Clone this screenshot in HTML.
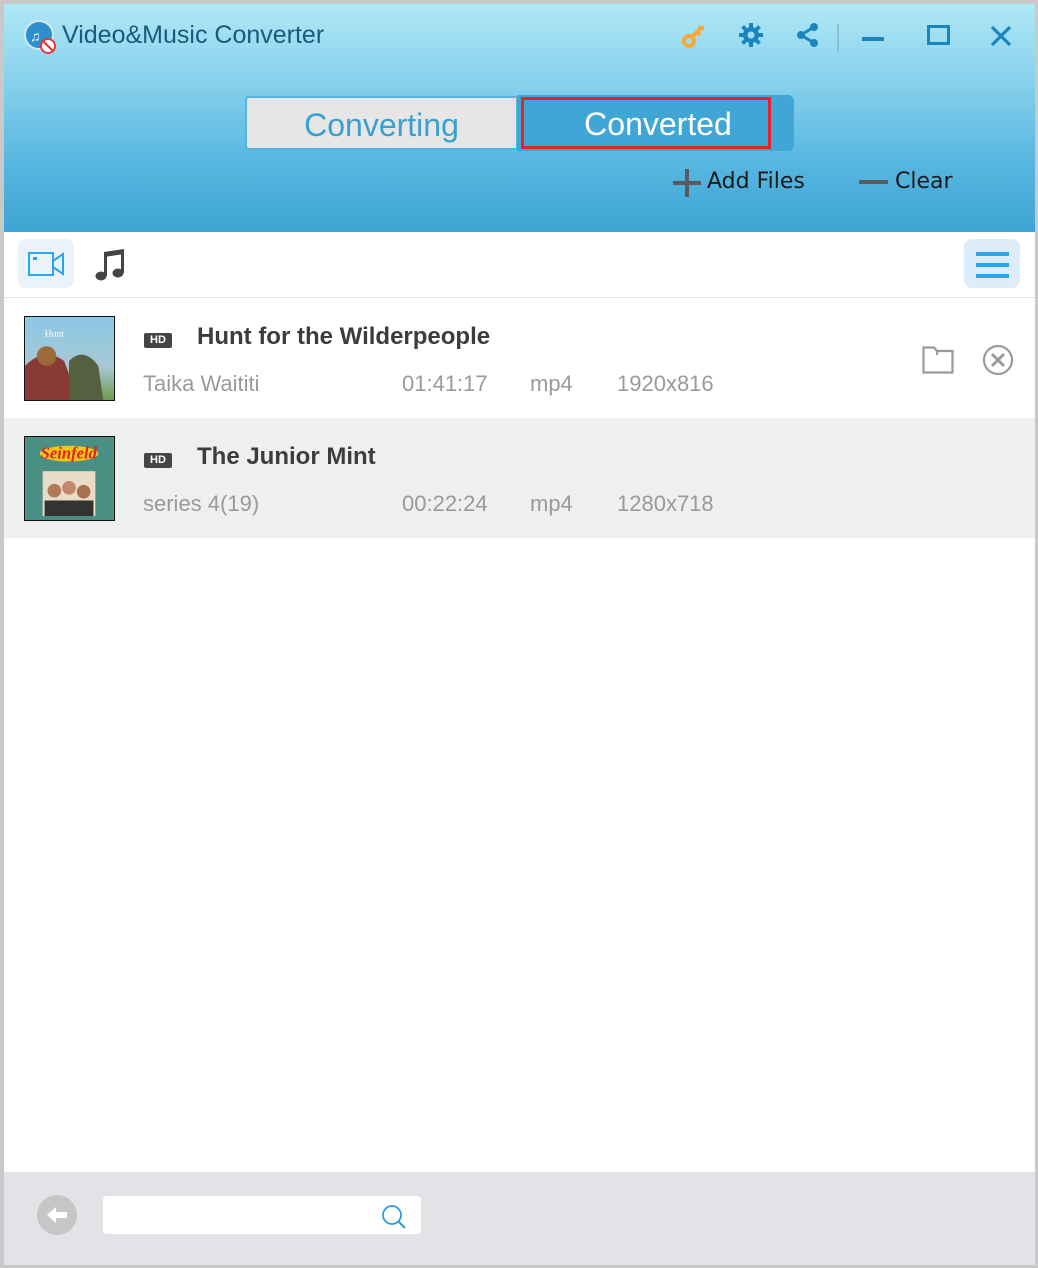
<!DOCTYPE html>
<html><head><meta charset="utf-8"><style>
*{margin:0;padding:0;box-sizing:border-box}
body{width:1038px;height:1268px;background:#c9c9c9;font-family:"Liberation Sans",sans-serif;position:relative;overflow:hidden}
.win{position:absolute;left:4px;top:4px;width:1031px;height:1261px;background:#fff;overflow:hidden}
.hdr{position:absolute;left:0;top:0;width:1031px;height:228px;background:linear-gradient(180deg,#b0e8f6 0%,#86d0ec 35%,#56b6e0 70%,#3ea5d4 100%)}
.abs{position:absolute}
.title{left:58px;top:17px;font-size:25px;color:#1b5a7a;font-family:"Liberation Sans",sans-serif}
.tab1{left:241px;top:92px;width:273px;height:54px;background:#e6e6e6;border:2px solid #55b5de;border-radius:4px 0 0 4px;color:#3aa0d2;font-size:32px;text-align:center;line-height:54px}
.tab2{left:513px;top:91px;width:277px;height:56px;background:#3fa6d5;border-radius:0 6px 6px 0}
.red{left:517px;top:93px;width:250px;height:52px;border:3px solid #e8212b;color:#fff;font-size:32px;text-align:center;line-height:48px;padding-left:24px}
.act{font-size:22px;color:#1a1a1a;font-family:"DejaVu Sans",sans-serif}
.row{position:absolute;left:0;width:1031px;height:120px}
.thumb{position:absolute;left:20px;top:18px;width:91px;height:85px;border:1px solid #111}
.hd{position:absolute;left:140px;width:28px;height:15px;background:#444;border-radius:2px;color:#fff;font-size:11px;font-weight:bold;text-align:center;line-height:15px}
.rt{position:absolute;left:193px;font-size:24px;font-weight:bold;color:#3c3c3c}
.sub{position:absolute;font-size:22px;color:#9a9a9a}
</style></head><body>
<div class="win">
<div class="hdr"></div>
<svg class="abs" style="left:20px;top:16px" width="36" height="36" viewBox="0 0 36 36"><circle cx="15" cy="15" r="14" fill="#2d8fce" stroke="#cfeaf7" stroke-width="2"/><text x="6" y="21" font-size="14" fill="#fff" font-family="Liberation Sans">♫</text><circle cx="24" cy="26" r="7" fill="#fff" stroke="#e33" stroke-width="2"/><line x1="19" y1="21" x2="29" y2="31" stroke="#e33" stroke-width="2"/></svg>
<div class="abs title">Video&amp;Music Converter</div>
<svg class="abs" style="left:676px;top:18px" width="28" height="28" viewBox="0 0 28 28"><circle cx="9" cy="19" r="5" fill="none" stroke="#f6a93b" stroke-width="4"/><path d="M12 15 L22 5 M18 6 L24 6 M17 10 L20 13" stroke="#f6a93b" stroke-width="4" fill="none"/></svg>
<svg class="abs" style="left:734px;top:18px" width="26" height="26" viewBox="0 0 26 26"><g fill="#1a86c0"><circle cx="13" cy="13" r="8"/><g id="t"><rect x="11" y="1" width="4" height="6"/></g><use href="#t" transform="rotate(45 13 13)"/><use href="#t" transform="rotate(90 13 13)"/><use href="#t" transform="rotate(135 13 13)"/><use href="#t" transform="rotate(180 13 13)"/><use href="#t" transform="rotate(225 13 13)"/><use href="#t" transform="rotate(270 13 13)"/><use href="#t" transform="rotate(315 13 13)"/></g><circle cx="13" cy="13" r="3.5" fill="#9fdcf2"/></svg>
<svg class="abs" style="left:792px;top:18px" width="24" height="26" viewBox="0 0 24 26"><g fill="#1a86c0"><circle cx="18" cy="5" r="4"/><circle cx="5" cy="13" r="4"/><circle cx="18" cy="21" r="4"/></g><path d="M18 5 L5 13 L18 21" stroke="#1a86c0" stroke-width="3" fill="none"/></svg>
<div class="abs" style="left:833px;top:20px;width:2px;height:28px;background:#8dbfd4"></div>
<div class="abs" style="left:858px;top:33px;width:22px;height:4px;background:#1a86c0"></div>
<div class="abs" style="left:923px;top:21px;width:23px;height:20px;border:3px solid #1a86c0"></div>
<svg class="abs" style="left:986px;top:21px" width="22" height="22" viewBox="0 0 22 22"><path d="M2 2 L20 20 M20 2 L2 20" stroke="#1a86c0" stroke-width="3.2"/></svg>
<div class="abs tab1">Converting</div>
<div class="abs tab2"></div>
<div class="abs red">Converted</div>
<svg class="abs" style="left:668px;top:164px" width="30" height="30" viewBox="0 0 30 30"><path d="M15 1 V29 M1 15 H29" stroke="#5a5a5a" stroke-width="4"/></svg>
<div class="abs act" style="left:703px;top:165px">Add Files</div>
<div class="abs" style="left:855px;top:176px;width:29px;height:4px;background:#5a5a5a"></div>
<div class="abs act" style="left:891px;top:165px">Clear</div>
<div class="abs" style="left:14px;top:235px;width:56px;height:49px;background:#ebf3fa;border-radius:8px"></div>
<svg class="abs" style="left:24px;top:247px" width="38" height="26" viewBox="0 0 38 26"><rect x="1" y="2" width="24" height="22" fill="none" stroke="#2aa6e8" stroke-width="2"/><path d="M25 10 L35 3 V23 L25 16" fill="none" stroke="#2aa6e8" stroke-width="2"/><rect x="5" y="6" width="4" height="3" fill="#2aa6e8"/></svg>
<svg class="abs" style="left:90px;top:244px" width="32" height="34" viewBox="0 0 32 34"><g fill="#444"><ellipse cx="7" cy="28" rx="5.5" ry="4.5"/><ellipse cx="24" cy="25" rx="5.5" ry="4.5"/><rect x="10" y="4" width="3" height="24"/><rect x="27" y="2" width="3" height="23"/><path d="M10 4 L30 1 V6 L10 9Z"/></g></svg>
<div class="abs" style="left:960px;top:235px;width:56px;height:49px;background:#dcedf9;border-radius:8px"></div>
<div class="abs" style="left:972px;top:248px;width:33px;height:4px;background:#2aa6e8;box-shadow:0 11px 0 #2aa6e8,0 22px 0 #2aa6e8"></div>
<div class="abs" style="left:0;top:293px;width:1031px;height:1px;background:#e0e0e0"></div>

<div class="row" style="top:294px;background:#fff">
<svg class="thumb" viewBox="0 0 91 85"><defs><linearGradient id="g1" x1="0" y1="0" x2="0" y2="1"><stop offset="0" stop-color="#8cc7e8"/><stop offset=".6" stop-color="#a7c8d4"/><stop offset="1" stop-color="#6d9a4c"/></linearGradient></defs><rect width="91" height="85" fill="url(#g1)"/><path d="M0 50 Q20 30 40 45 L55 85 H0Z" fill="#8a3a35"/><circle cx="22" cy="40" r="10" fill="#9a6a3a"/><path d="M45 45 Q60 30 75 50 L80 85 H45Z" fill="#556040"/><text x="20" y="20" font-size="10" fill="#fff" font-family="Liberation Serif">Hunt</text></svg>
<div class="hd" style="top:35px">HD</div>
<div class="rt" style="top:25px">Hunt for the Wilderpeople</div>
<div class="sub" style="left:139px;top:73px">Taika Waititi</div>
<div class="sub" style="left:398px;top:73px">01:41:17</div>
<div class="sub" style="left:526px;top:73px">mp4</div>
<div class="sub" style="left:613px;top:73px">1920x816</div>
<svg class="abs" style="left:918px;top:48px" width="32" height="28" viewBox="0 0 32 28"><path d="M1.5 1.5 H12 L15 5 H30.5 V26.5 H1.5Z M15 5 V9" fill="none" stroke="#9a9a9a" stroke-width="2.2"/></svg>
<svg class="abs" style="left:978px;top:46px" width="32" height="32" viewBox="0 0 32 32"><circle cx="16" cy="16" r="14" fill="none" stroke="#9a9a9a" stroke-width="2.2"/><path d="M10 10 L22 22 M22 10 L10 22" stroke="#9a9a9a" stroke-width="3"/></svg>
</div>
<div class="row" style="top:414px;background:#eeefef">
<svg class="thumb" viewBox="0 0 91 85"><rect width="91" height="85" fill="#4a8f84"/><ellipse cx="45" cy="17" rx="30" ry="8" fill="#f5c518"/><text x="16" y="22" font-size="17" font-style="italic" fill="#d22" font-family="Liberation Serif" font-weight="bold">Seinfeld</text><rect x="18" y="35" width="54" height="46" fill="#e8dcc8"/><circle cx="30" cy="55" r="7" fill="#b07a5a"/><circle cx="45" cy="52" r="7" fill="#c08a6a"/><circle cx="60" cy="56" r="7" fill="#a87050"/><rect x="20" y="65" width="50" height="16" fill="#333"/></svg>
<div class="hd" style="top:35px">HD</div>
<div class="rt" style="top:25px">The Junior Mint</div>
<div class="sub" style="left:139px;top:73px">series 4(19)</div>
<div class="sub" style="left:398px;top:73px">00:22:24</div>
<div class="sub" style="left:526px;top:73px">mp4</div>
<div class="sub" style="left:613px;top:73px">1280x718</div>
</div>

<div class="abs" style="left:0;top:1168px;width:1031px;height:93px;background:#e1e3e6"></div>
<svg class="abs" style="left:33px;top:1191px" width="40" height="40" viewBox="0 0 40 40"><circle cx="20" cy="20" r="20" fill="#c6c6c6"/><path d="M10 20 L19 12 V17 H30 V23 H19 V28Z" fill="#fff"/></svg>
<div class="abs" style="left:99px;top:1192px;width:318px;height:38px;background:#fff;border-radius:4px"></div>
<svg class="abs" style="left:376px;top:1199px" width="30" height="30" viewBox="0 0 30 30"><circle cx="12" cy="12" r="9" fill="none" stroke="#2a9fd6" stroke-width="1.8"/><path d="M18.5 18.5 L25 25" stroke="#2a9fd6" stroke-width="2"/></svg>
</div>
</body></html>
